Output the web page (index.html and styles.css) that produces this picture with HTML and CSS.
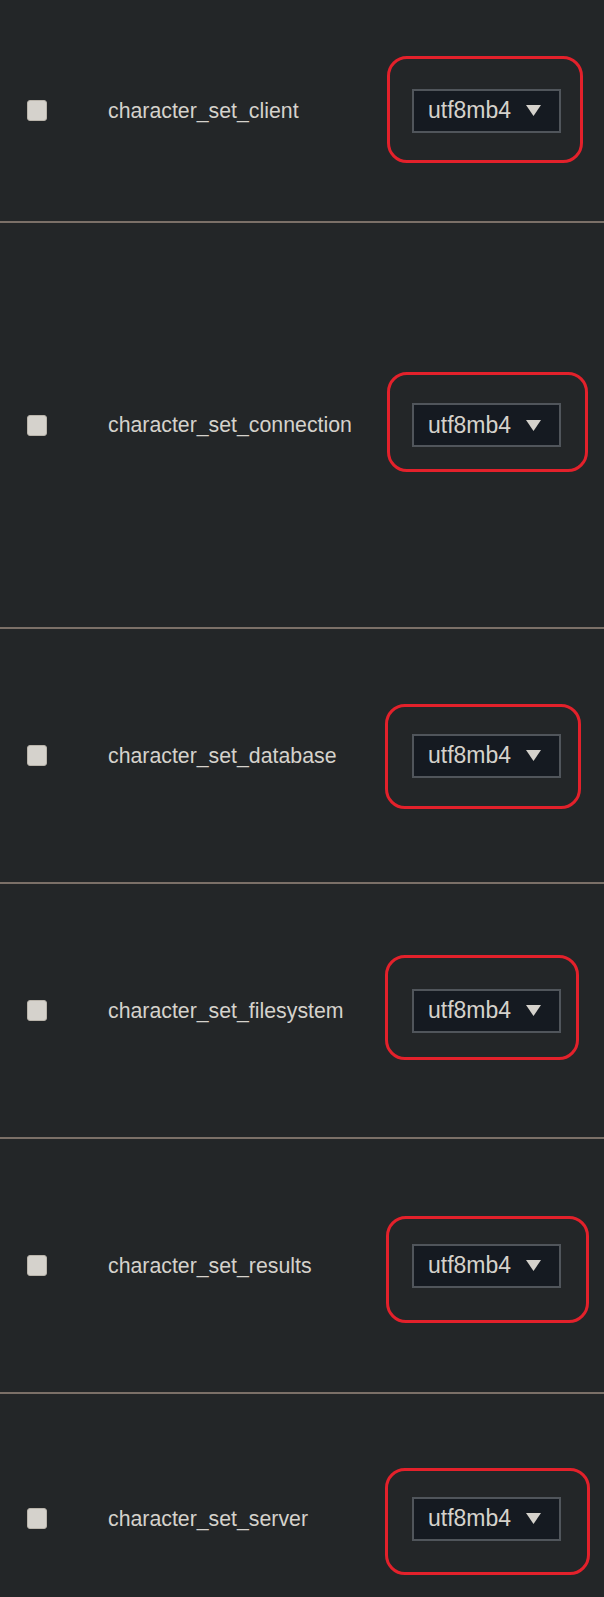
FILE: index.html
```html
<!DOCTYPE html>
<html lang="en">
<head>
<meta charset="utf-8">
<title>Parameters</title>
<link rel="stylesheet" href="styles.css">
</head>
<body>
<div class="table">
  <div class="row row-1">
    <div class="check-cell"><span class="checkbox"></span></div>
    <div class="name-cell">character_set_client</div>
    <div class="value-cell">
      <div class="select-wrap">
        <div class="select"><span class="select-text">utf8mb4</span><svg class="caret" viewBox="0 0 15 11" width="15" height="11"><path d="M0 0H15L7.5 11Z" fill="#d5d2cc"/></svg></div>
        <span class="mark mark-1"></span>
      </div>
    </div>
  </div>
  <div class="row row-2">
    <div class="check-cell"><span class="checkbox"></span></div>
    <div class="name-cell">character_set_connection</div>
    <div class="value-cell">
      <div class="select-wrap">
        <div class="select"><span class="select-text">utf8mb4</span><svg class="caret" viewBox="0 0 15 11" width="15" height="11"><path d="M0 0H15L7.5 11Z" fill="#d5d2cc"/></svg></div>
        <span class="mark mark-2"></span>
      </div>
    </div>
  </div>
  <div class="row row-3">
    <div class="check-cell"><span class="checkbox"></span></div>
    <div class="name-cell">character_set_database</div>
    <div class="value-cell">
      <div class="select-wrap">
        <div class="select"><span class="select-text">utf8mb4</span><svg class="caret" viewBox="0 0 15 11" width="15" height="11"><path d="M0 0H15L7.5 11Z" fill="#d5d2cc"/></svg></div>
        <span class="mark mark-3"></span>
      </div>
    </div>
  </div>
  <div class="row row-4">
    <div class="check-cell"><span class="checkbox"></span></div>
    <div class="name-cell">character_set_filesystem</div>
    <div class="value-cell">
      <div class="select-wrap">
        <div class="select"><span class="select-text">utf8mb4</span><svg class="caret" viewBox="0 0 15 11" width="15" height="11"><path d="M0 0H15L7.5 11Z" fill="#d5d2cc"/></svg></div>
        <span class="mark mark-4"></span>
      </div>
    </div>
  </div>
  <div class="row row-5">
    <div class="check-cell"><span class="checkbox"></span></div>
    <div class="name-cell">character_set_results</div>
    <div class="value-cell">
      <div class="select-wrap">
        <div class="select"><span class="select-text">utf8mb4</span><svg class="caret" viewBox="0 0 15 11" width="15" height="11"><path d="M0 0H15L7.5 11Z" fill="#d5d2cc"/></svg></div>
        <span class="mark mark-5"></span>
      </div>
    </div>
  </div>
  <div class="row row-6">
    <div class="check-cell"><span class="checkbox"></span></div>
    <div class="name-cell">character_set_server</div>
    <div class="value-cell">
      <div class="select-wrap">
        <div class="select"><span class="select-text">utf8mb4</span><svg class="caret" viewBox="0 0 15 11" width="15" height="11"><path d="M0 0H15L7.5 11Z" fill="#d5d2cc"/></svg></div>
        <span class="mark mark-6"></span>
      </div>
    </div>
  </div>
</div>
</body>
</html>
```

FILE: styles.css
```css
html, body {
  margin: 0;
  padding: 0;
  background: #232628;
}

body {
  font-family: "Liberation Sans", Arial, sans-serif;
  color: #d5d2cc;
  overflow: hidden;
  height: 1597px;
}

.table {
  display: flex;
  flex-direction: column;
}

.row {
  display: flex;
  align-items: center;
  border-bottom: 2px solid #7b7068;
  flex-shrink: 0;
}

.row-1 { height: 221px; }
.row-2 { height: 404px; }
.row-3, .row-4, .row-5 { height: 253px; }
.row-6 { height: 249px; border-bottom: none; }

.check-cell {
  width: 108px;
  padding-left: 27px;
  box-sizing: border-box;
  display: flex;
  align-items: center;
}

.checkbox {
  display: block;
  width: 20px;
  height: 21px;
  box-sizing: border-box;
  background: #d5d2cc;
  border: 1px solid #b9b4ab;
  border-radius: 3px;
}

.name-cell {
  width: 304px;
  font-size: 21.3px;
  line-height: 24px;
}

.value-cell {
  display: flex;
  align-items: center;
}

.select-wrap {
  position: relative;
}

.select {
  width: 149px;
  height: 44px;
  box-sizing: border-box;
  background: #151a21;
  border: 2px solid #50555b;
  display: flex;
  align-items: center;
  padding-left: 14px;
  font-size: 23px;
}

.select-text {
  width: 98px;
}

.caret {
  display: block;
}

.mark {
  position: absolute;
  box-sizing: border-box;
  border: 3px solid #e3212b;
  border-radius: 20px;
}

.mark-1 { left: -25px; top: -33px; width: 196px; height: 107px; }
.mark-2 { left: -25px; top: -31px; width: 201px; height: 100px; }
.mark-3 { left: -27px; top: -30px; width: 196px; height: 105px; }
.mark-4 { left: -27px; top: -34px; width: 194px; height: 105px; }
.mark-5 { left: -26px; top: -28px; width: 203px; height: 107px; }
.mark-6 { left: -27px; top: -29px; width: 205px; height: 107px; }
```
